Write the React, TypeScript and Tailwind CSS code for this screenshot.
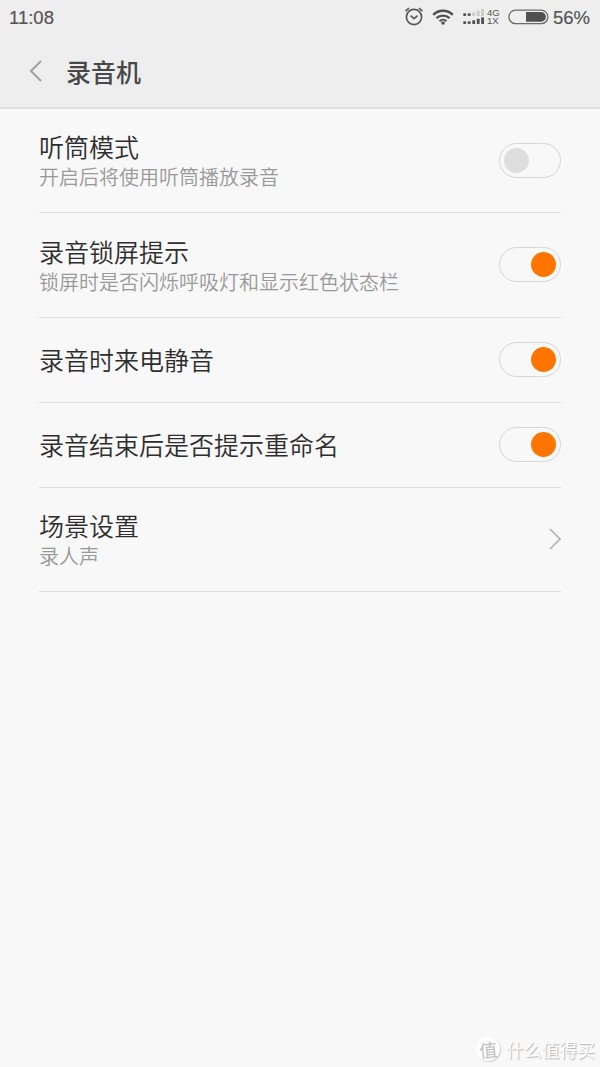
import React from "react";
import clsx from "clsx";

type Setting = {
  title: string;
  summary?: string;
  // rows without a switch open a sub page and show an arrow instead
  checked?: boolean;
  height: string;
  textPadding: string;
};

const settings: Setting[] = [
  {
    title: "听筒模式",
    summary: "开启后将使用听筒播放录音",
    checked: false,
    height: "h-[104px]",
    textPadding: "pt-[3px]",
  },
  {
    title: "录音锁屏提示",
    summary: "锁屏时是否闪烁呼吸灯和显示红色状态栏",
    checked: true,
    height: "h-[105px]",
    textPadding: "pt-[4px]",
  },
  {
    title: "录音时来电静音",
    checked: true,
    height: "h-[85px]",
    textPadding: "pb-[2px]",
  },
  {
    title: "录音结束后是否提示重命名",
    checked: true,
    height: "h-[85px]",
    textPadding: "pb-[2px]",
  },
  {
    title: "场景设置",
    summary: "录人声",
    height: "h-[104px]",
    textPadding: "pt-[3px]",
  },
];

const AlarmIcon = () => (
  <svg
    className="w-5 h-5"
    viewBox="0 0 20 20"
    fill="none"
    stroke="#585858"
    strokeWidth="1.7"
  >
    <circle cx="10" cy="10" r="7.6" />
    <path d="M6.6 8.6 10 11.6l3.6-2.9" />
    <path d="M1.5 4.2 5 1.2M18.5 4.2 15 1.2" />
  </svg>
);

const WifiIcon = () => (
  <svg className="w-[22px] h-4" viewBox="0 0 22 16" fill="none" stroke="#505050">
    <path d="M1.2 5.8a14 14 0 0 1 19.6 0" strokeWidth="2.5" />
    <path d="M4.4 9.2a9.5 9.5 0 0 1 13.2 0" strokeWidth="2.3" />
    <path d="M7.5 12.2a5 5 0 0 1 7 0" strokeWidth="2.1" />
    <circle cx="11" cy="14" r="1.8" fill="#505050" stroke="none" />
  </svg>
);

const SignalIcon = () => (
  <svg className="w-[22px] h-[17px]" viewBox="0 0 22 17" fill="#505050">
    <rect x="0.2" y="4.2" width="3" height="2.8" rx="1" />
    <rect x="4.7" y="4.2" width="3" height="2.8" rx="1" />
    <g fill="#cacaca">
      <rect x="9.3" y="3.2" width="2.8" height="3.8" />
      <rect x="13.8" y="1.6" width="2.8" height="5.4" />
      <rect x="18.2" y="0" width="2.8" height="7" />
    </g>
    <rect x="0.2" y="12.2" width="3" height="2.8" rx="1" />
    <rect x="4.7" y="12.2" width="3" height="2.8" rx="1" />
    <rect x="9.3" y="11.2" width="2.8" height="3.8" rx="0.5" />
    <rect x="13.8" y="9.8" width="2.8" height="5.2" rx="0.5" />
    <rect x="18.2" y="8.2" width="2.8" height="6.8" rx="0.5" />
  </svg>
);

const BatteryIcon = () => (
  <svg className="w-[41px] h-4" viewBox="0 0 41 16">
    <rect
      x="0.9"
      y="1.1"
      width="39"
      height="13.6"
      rx="6.8"
      fill="none"
      stroke="#6a6a6a"
      strokeWidth="1.3"
    />
    <path d="M18 3h15a4.9 4.9 0 0 1 0 9.8H18z" fill="#505050" />
  </svg>
);

const StatusBar = () => (
  <div className="flex h-[34px] items-center pl-[9px] pr-[10px] font-['Liberation_Sans',sans-serif] text-[18.5px] text-[#555] [-webkit-text-stroke:0.2px_#555]">
    <span className="flex-1 pt-px">11:08</span>
    <div className="mb-px">
      <AlarmIcon />
    </div>
    <div className="ml-2">
      <WifiIcon />
    </div>
    <div className="ml-[9px]">
      <SignalIcon />
    </div>
    <div className="ml-[2px] w-[14px] text-[9.5px] leading-[8px] [-webkit-text-stroke:0]">
      <div>4G</div>
      <div>1X</div>
    </div>
    <div className="ml-[7px]">
      <BatteryIcon />
    </div>
    <span className="ml-[4px] -mr-px w-[38px] pt-px">56%</span>
  </div>
);

const Toggle: React.FC<{ checked: boolean }> = ({ checked }) => (
  <div
    className={clsx(
      "flex h-[35px] w-[62px] shrink-0 items-center rounded-full border border-[#d6d6d6] px-1",
      checked && "justify-end"
    )}
  >
    <div
      className={clsx(
        "h-[25px] w-[25px] rounded-full",
        checked ? "bg-[#ff7500]" : "bg-[#dedede]"
      )}
    />
  </div>
);

const SettingRow: React.FC<Setting> = ({
  title,
  summary,
  checked,
  height,
  textPadding,
}) => (
  <div
    className={clsx(
      "flex items-center justify-between border-b border-[#dedede] pb-px",
      height
    )}
  >
    <div className={textPadding}>
      <div className="text-[25px] leading-[30px] font-[350] text-[#2e2e2e]">
        {title}
      </div>
      {summary && (
        <div className="pt-px text-[20px] leading-[30px] font-[350] text-[#999]">
          {summary}
        </div>
      )}
    </div>
    {checked === undefined ? (
      <svg
        className="h-[22px] w-3"
        viewBox="0 0 12 22"
        fill="none"
        stroke="#b2b2b2"
        strokeWidth="1.6"
      >
        <path d="M1 1l10 10L1 21" />
      </svg>
    ) : (
      <Toggle checked={checked} />
    )}
  </div>
);

const Watermark = () => (
  <div className="flex items-center justify-end gap-[6px] pr-[5px] pb-[6px]">
    <div className="flex h-6 w-6 items-center justify-center rounded-full bg-white text-[18px] leading-6 text-[#c0c0c0] shadow-[1px_1px_1px_#d0d0d0]">
      <span className="-rotate-6">值</span>
    </div>
    <span className="text-[17.8px] leading-6 text-white [text-shadow:1px_1px_1px_#b4b4b4]">
      什么值得买
    </span>
  </div>
);

export default function App() {
  return (
    <div className="flex h-[1067px] w-[600px] flex-col overflow-hidden bg-[#f8f8f8] font-['Noto_Sans_CJK_SC',sans-serif]">
      <header className="h-[109px] border-b-2 border-[#e0e0e0] bg-[#eee]">
        <StatusBar />
        <div className="flex h-[73px] items-center pl-[29px]">
          <svg
            className="h-[22px] w-[13px]"
            viewBox="0 0 13 22"
            fill="none"
            stroke="#a2a2a2"
            strokeWidth="2"
          >
            <path d="M12 1 2 11l10 10" />
          </svg>
          <h1 className="ml-6 text-[25px] leading-[30px] font-medium text-[#484848]">
            录音机
          </h1>
        </div>
      </header>
      <main className="flex-1 px-[39px]">
        {settings.map((item) => (
          <SettingRow key={item.title} {...item} />
        ))}
      </main>
      <Watermark />
    </div>
  );
}
